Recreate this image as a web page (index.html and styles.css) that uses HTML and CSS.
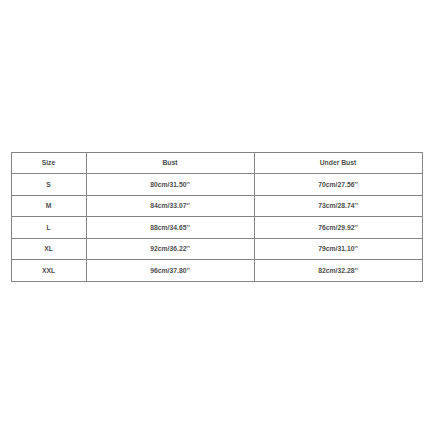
FILE: index.html
```html
<!DOCTYPE html>
<html>
<head>
<meta charset="utf-8">
<link rel="stylesheet" href="styles.css">
</head>
<body>
<div class="page">
  <table class="size-chart">
    <colgroup>
      <col class="col-size">
      <col class="col-bust">
      <col class="col-under">
    </colgroup>
    <tr><td>Size</td><td>Bust</td><td>Under Bust</td></tr>
    <tr><td>S</td><td>80cm/31.50''</td><td>70cm/27.56''</td></tr>
    <tr><td>M</td><td>84cm/33.07''</td><td>73cm/28.74''</td></tr>
    <tr><td>L</td><td>88cm/34.65''</td><td>76cm/29.92''</td></tr>
    <tr><td>XL</td><td>92cm/36.22''</td><td>79cm/31.10''</td></tr>
    <tr><td>XXL</td><td>96cm/37.80''</td><td>82cm/32.28''</td></tr>
  </table>
</div>
</body>
</html>
```
FILE: styles.css
```css
html, body {
  margin: 0;
  padding: 0;
  background: #ffffff;
}
.page {
  width: 433px;
  height: 433px;
  display: flex;
  align-items: center;
  justify-content: center;
}
.size-chart {
  border-collapse: collapse;
  table-layout: fixed;
  width: 411px;
  font-family: "Liberation Sans", Arial, sans-serif;
  font-weight: bold;
  font-size: 6.8px;
  color: #505050;
}
.col-size { width: 75px; }
.col-bust { width: 168px; }
.col-under { width: 168px; }
.size-chart td {
  border: 1px solid #858585;
  height: 20.5px;
  padding: 0;
  text-align: center;
  vertical-align: middle;
}
```
